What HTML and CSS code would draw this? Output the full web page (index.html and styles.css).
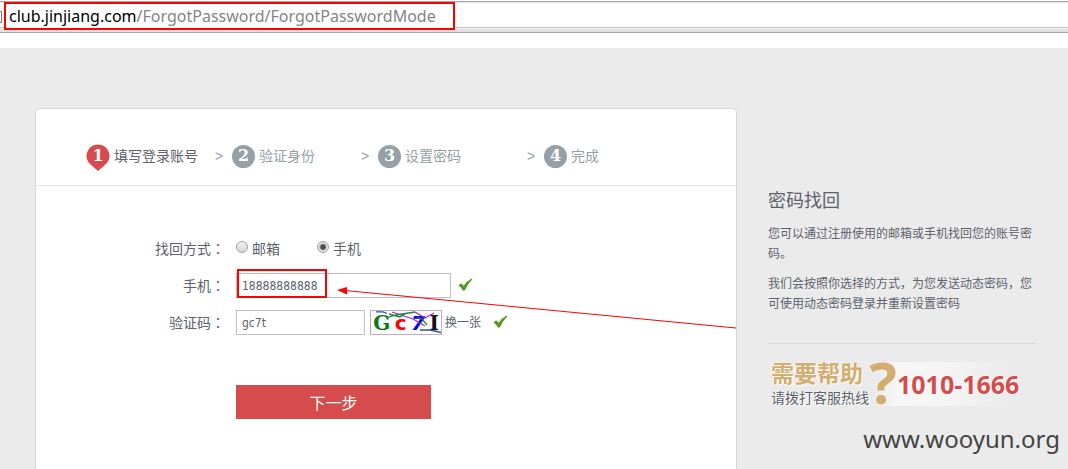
FILE: index.html
```html
<!DOCTYPE html>
<html lang="zh-CN">
<head>
<meta charset="utf-8">
<meta name="viewport" content="width=device-width, initial-scale=1">
<title>密码找回</title>
<link rel="stylesheet" href="styles.css">
</head>
<body>
<header class="browser-bar">
  <svg class="page-icon" width="3" height="14" viewBox="0 0 3 14" aria-hidden="true"><path d="M0 1.5H1.5V12.5H0" fill="none" stroke="#777"/></svg>
  <div class="address"><span class="host">club.jinjiang.com</span>/ForgotPassword/ForgotPasswordMode</div>
</header>
<main class="page">
  <section class="card">
    <ol class="steps">
      <li class="step active">
        <span class="badge"><svg class="pin" width="24" height="28" viewBox="0 0 24 28" aria-hidden="true"><path d="M12 0.5A11.5 11.5 0 0 0 2.6 18.6Q3.6 20 12 27Q20.4 20 21.4 18.6A11.5 11.5 0 0 0 12 0.5Z" fill="#d64c4c"/></svg><b class="number">1</b></span>填写登录账号
      </li>
      <li class="step"><span class="arrow">&gt;</span><span class="badge"><b class="number">2</b></span>验证身份</li>
      <li class="step"><span class="arrow">&gt;</span><span class="badge"><b class="number">3</b></span>设置密码</li>
      <li class="step"><span class="arrow">&gt;</span><span class="badge"><b class="number">4</b></span>完成</li>
    </ol>
    <form class="form">
      <div class="row" role="radiogroup" aria-labelledby="mode-label">
        <span class="label" id="mode-label">找回方式<span class="mark" lang="zh-TW">：</span></span>
        <label class="choice"><input class="radio" type="radio" name="mode">邮箱</label>
        <label class="choice"><input class="radio" type="radio" name="mode" checked>手机</label>
      </div>
      <div class="row">
        <label class="label" for="phone">手机<span class="mark" lang="zh-TW">：</span></label>
        <div class="phone-field">
          <input class="text-input" id="phone" type="text" value="18888888888">
          <span class="highlight"></span>
          <svg class="pointer" width="399" height="45" viewBox="0 0 399 45" aria-hidden="true"><path d="M8 5.5L399 43" stroke="#f00" fill="none"/><path d="M0 5L10 2V9.5Z" fill="#f00"/></svg>
        </div>
        <svg class="check" width="15" height="14" viewBox="0 0 15 14" aria-hidden="true"><path d="M0.5 7.2L3.2 5.2L5.7 7.8Q9 3 13.6 0.6L14.4 1.2Q9.5 6 6.8 12.4H4.8Q3.2 9.5 0.5 7.2Z" fill="#559a25"/></svg>
      </div>
      <div class="row">
        <label class="label" for="code">验证码<span class="mark" lang="zh-TW">：</span></label>
        <input class="text-input code-input" id="code" type="text" value="gc7t">
        <div class="captcha">
          <b class="c1">G</b><b class="c2">c</b><b class="c3">7</b><b class="c4">I</b>
          <svg class="noise" viewBox="0 0 70 23" aria-hidden="true"><g fill="none" stroke-width="1.3"><path d="M5 .8L12 .8L16 2.5M49 19L59 19L70 21.5" stroke="#2452a6"/><path d="M21 1L30 4L42 8L54 15M44 1L54 7L63 2" stroke="#a22cc0"/><path d="M15 7L25 4L44 1M18 3L29 6L34 3M46 6L51 8L56 14" stroke="#228044"/></g></svg>
        </div>
        <a class="refresh" href="#">换一张</a>
        <svg class="check" width="15" height="14" viewBox="0 0 15 14" aria-hidden="true"><path d="M0.5 7.2L3.2 5.2L5.7 7.8Q9 3 13.6 0.6L14.4 1.2Q9.5 6 6.8 12.4H4.8Q3.2 9.5 0.5 7.2Z" fill="#559a25"/></svg>
      </div>
      <button class="submit" type="button">下一步</button>
    </form>
  </section>
  <aside class="side">
    <h2 class="side-title">密码找回</h2>
    <p class="side-text">您可以通过注册使用的邮箱或手机找回您的账号密码。</p>
    <p class="side-text">我们会按照你选择的方式，为您发送动态密码，您可使用动态密码登录并重新设置密码</p>
    <div class="hotline">
      <div class="help"><strong class="help-title">需要帮助</strong><span class="help-text">请拨打客服热线</span></div>
      <span class="question">?</span>
      <strong class="tel">1010-1666</strong>
    </div>
  </aside>
  <div class="watermark">www.wooyun.org</div>
</main>
</body>
</html>
```

FILE: styles.css
```css
* { box-sizing: border-box; }

body {
  margin: 0;
  min-height: 100vh;
  display: flex;
  flex-direction: column;
  background: #fff;
  color: #5c626b;
  font-family: "Liberation Sans", "Noto Sans CJK SC", sans-serif;
  font-size: 14px;
  line-height: 20px;
}

/* Browser address bar */
.browser-bar {
  display: flex;
  align-items: center;
  gap: 1px;
  height: 33px;
  margin-bottom: 15px;
  background: linear-gradient(#fff 0 1px, #a6a6a6 1px 2px, #e6e6e6 2px 3px, #fff 3px 27px, #c4c4c4 27px 28px, #f2f2f2 28px 29px, #e2e2e2 29px 32px, #a4a4a4 32px);
}

.address {
  height: 28px;
  padding: 0 17px 0 3px;
  margin-bottom: 2px;
  border: 2px solid #f00;
  background: #fff;
  color: #858585;
  font-family: "Noto Sans", sans-serif;
  font-size: 16px;
  line-height: 24px;
  white-space: nowrap;
}

.host { color: #000; }

/* Page */
.page {
  position: relative;
  flex: 1;
  display: flex;
  gap: 31px;
  padding: 60px 33px 0 35px;
  background: #ebebeb;
}

.card {
  flex: 1;
  border: 1px solid #d8d8d8;
  border-bottom: 0;
  border-radius: 5px 5px 0 0;
  background: #fff;
}

/* Progress steps */
.steps {
  display: grid;
  grid-template-columns: 129px 146px 166px 1fr;
  margin: 0;
  padding: 35px 0 17px 50px;
  border-bottom: 1px solid #e6e6e6;
  list-style: none;
}

.step {
  display: flex;
  align-items: center;
  height: 24px;
  color: #969fa7;
  white-space: nowrap;
}

.step.active { color: #5c626b; }

.arrow {
  width: 17px;
}

.badge {
  position: relative;
  display: grid;
  place-items: center;
  width: 23px;
  height: 23px;
  margin-right: 4px;
  border-radius: 50%;
  background: #95a0a7;
  color: #fff;
}

.active .badge {
  width: 24px;
  background: none;
}

.pin {
  position: absolute;
  top: -1px;
  left: 0;
}

.number {
  position: relative;
  font-family: "DejaVu Serif", serif;
  font-size: 16px;
}

/* Form */
.form {
  display: flex;
  flex-direction: column;
  gap: 12px;
  padding: 50px 0 24px 100px;
}

.row {
  display: flex;
  align-items: center;
  height: 25px;
}

.label {
  width: 89px;
  margin-right: 11px;
  text-align: right;
}

/* Full-width punctuation centred in its cell */
.mark { font-family: "Noto Sans CJK TC", sans-serif; }

.choice {
  display: flex;
  align-items: center;
  gap: 4px;
  width: 81px;
}

.radio {
  appearance: none;
  width: 12px;
  height: 12px;
  margin: 0 0 4px;
  border: 1px solid #a0a0a0;
  border-radius: 50%;
  background: linear-gradient(#f2f2f2, #d8d8d8);
}

.radio:checked {
  background: radial-gradient(circle, #4a4a4a 0 2px, #e6e6e6 4px);
}

.phone-field {
  position: relative;
  width: 215px;
  margin-right: 7px;
}

.text-input {
  display: block;
  width: 100%;
  height: 25px;
  padding: 0 5px;
  border: 1px solid #bfbfbf;
  background: #fff;
  color: #5c626b;
  font-family: "DejaVu Sans Condensed", "DejaVu Sans", sans-serif;
  font-size: 12px;
}

.code-input {
  width: 129px;
  margin-right: 5px;
}

.highlight {
  position: absolute;
  top: -4px;
  left: 1px;
  width: 90px;
  height: 29px;
  border: 2px solid #f00;
}

.pointer {
  position: absolute;
  top: 12px;
  left: 101px;
  pointer-events: none;
}

.check { margin-bottom: 2px; }

.captcha {
  position: relative;
  display: flex;
  justify-content: space-around;
  align-items: center;
  width: 72px;
  height: 25px;
  margin-right: 3px;
  border: 1px solid #c3a9c3;
  background: #fff;
  font-family: "DejaVu Serif", serif;
  font-size: 20px;
}

.c1 { color: #087c12; font-family: "DejaVu Serif", serif; }
.c2 { color: #f00; font-family: "DejaVu Sans", sans-serif; }
.c3 { color: #00f; font-family: "DejaVu Sans", sans-serif; font-style: italic; }
.c4 { color: #111; }

.noise {
  position: absolute;
  inset: 0;
}

.refresh {
  margin-right: 12px;
  color: #5c626b;
  font-size: 12px;
  text-decoration: none;
}

.submit {
  width: 195px;
  height: 34px;
  margin: 38px 0 0 100px;
  padding: 0;
  border: 0;
  background: #d64c4c;
  color: #fff;
  font: 16px/34px "Noto Sans CJK SC", sans-serif;
}

/* Sidebar */
.side {
  width: 267px;
  padding-top: 81px;
}

.side-title {
  margin: 0 0 11px;
  font-size: 18px;
  font-weight: 400;
  line-height: 24px;
}

.side-text {
  margin: 0 0 10px;
  font-size: 12px;
  line-height: 20px;
}

.hotline {
  display: flex;
  align-items: center;
  margin-top: 29px;
  padding: 18px 0 0 3px;
  border-top: 1px solid #d8d8d8;
  background: linear-gradient(90deg, #ebebeb 40%, #f7f7f7 48%, #f5f5f5 65%, #ebebeb 90%) content-box;
}

.help {
  display: flex;
  flex-direction: column;
  gap: 4px;
  width: 98px;
  text-shadow: 1px 1px 1px #fff, -1px 0 1px #fff;
  white-space: nowrap;
}

.help-title {
  color: #d3ae70;
  font-size: 23px;
  line-height: 24px;
}

.help-text { line-height: 16px; }

.question {
  width: 28px;
  color: #d3ae70;
  font-family: "Noto Sans", sans-serif;
  font-size: 58px;
  font-weight: 700;
  line-height: 40px;
  padding-bottom: 4px;
  text-shadow: -1px 0 1px #fff;
}

.tel {
  color: #d64c4c;
  font-family: "Noto Sans", sans-serif;
  font-size: 25px;
  text-shadow: 1px 1px 1px #fff, -1px 0 1px #fff;
}

.watermark {
  position: absolute;
  right: 8px;
  bottom: 12px;
  color: #444;
  font-family: "Noto Sans", sans-serif;
  font-size: 24px;
  line-height: 36px;
}
```
